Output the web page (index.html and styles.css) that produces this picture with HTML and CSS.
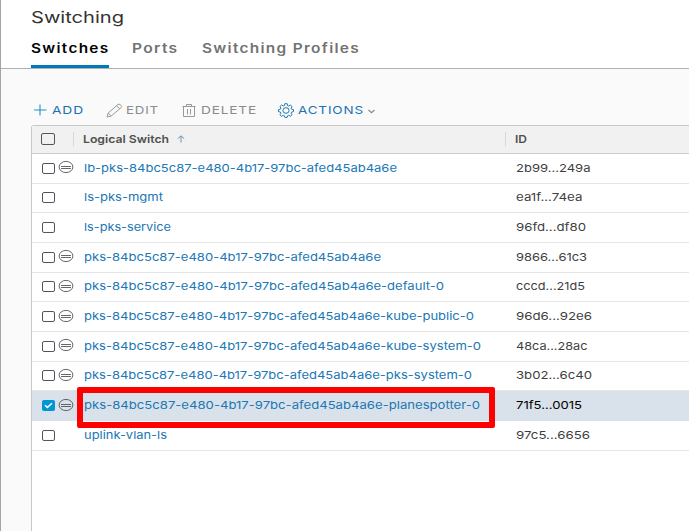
FILE: index.html
```
<!DOCTYPE html>
<html lang="en">
<head>
<meta charset="utf-8">
<title>Switching</title>
<link rel="stylesheet" href="styles.css">
</head>
<body>
<svg class="defs" aria-hidden="true">
  <symbol id="minus" viewBox="0 0 16 14"><ellipse cx="8" cy="7" rx="6.9" ry="5.6" fill="none" stroke="#555" stroke-width=".9"/><path d="M3 6.5h10M3 8.5h10" stroke="#555" stroke-width=".9"/></symbol>
</svg>
<header class="top">
  <h1><span class="fit" data-w="93">Switching</span></h1>
  <nav class="tabs">
    <a class="tab active"><span class="fit" data-w="78.5">Switches</span></a>
    <a class="tab ports"><span class="fit" data-w="46.5">Ports</span></a>
    <a class="tab profiles"><span class="fit" data-w="158">Switching Profiles</span></a>
  </nav>
</header>
<main class="content">
  <div class="toolbar">
    <button class="tool add"><svg width="14" height="14" viewBox="0 0 14 14"><path d="M7 1.5v11M1 7h12.5" stroke="#2591c5" stroke-width="1.1"/></svg><span class="fit" data-w="32">ADD</span></button>
    <button class="tool edit"><svg width="17" height="15" viewBox="0 0 17 15"><path d="M1 14l1.2-4L12 1.5q1-.8 2 .1l1.2 1q1 1 0 1.9L5.2 13z M10.5 2.8l3.4 3M2.2 10l3 3" fill="none" stroke="#999" stroke-width="1"/></svg><span class="fit" data-w="33">EDIT</span></button>
    <button class="tool delete"><svg width="14" height="15" viewBox="0 0 14 15"><path d="M.5 3.5h13M1.5 3.5v10h11v-10M4.5 3.5v-2h5v2M5.5 6v5.5M8.5 6v5.5" fill="none" stroke="#999"/></svg><span class="fit" data-w="56">DELETE</span></button>
    <button class="tool actions"><svg width="16" height="15" viewBox="0 0 16 15"><path d="M6.8.7h2.4l.4 1.8 1.1.5 1.7-1 1.7 1.6-1 1.5.5 1.1 1.9.4v2l-1.9.5-.5 1.1 1 1.5-1.7 1.6-1.7-1-1.1.5-.4 1.6H6.8l-.4-1.6-1.1-.5-1.7 1-1.7-1.6 1-1.5-.5-1.1-1.9-.5v-2l1.9-.4.5-1.1-1-1.5L3.6 2l1.7 1 1.1-.5z" fill="none" stroke="#2179b8"/><ellipse cx="8" cy="7.5" rx="3.1" ry="2.8" fill="none" stroke="#2179b8"/></svg><span class="fit" data-w="66">ACTIONS</span><svg class="caret" width="7" height="5" viewBox="0 0 7 5"><path d="M.5 1l3 2.7 3-2.7" fill="none" stroke="#888" stroke-width="1.2"/></svg></button>
  </div>
  <section class="grid">
    <div class="row head"><i class="box"></i><div class="name"><span class="fit" data-w="86">Logical Switch</span><svg width="8" height="8" viewBox="0 0 8 8"><path d="M4 7.5V1M.8 3.7L4 .8l3.2 2.9" fill="none" stroke="#6a93b3"/></svg></div><div class="id"><span class="fit" data-w="12">ID</span></div></div>
    <div class="row"><i class="box"></i><svg class="tag"><use href="#minus"/></svg><a class="name"><span class="fit" data-w="313">lb-pks-84bc5c87-e480-4b17-97bc-afed45ab4a6e</span></a><div class="id"><span class="fit" data-w="74.5">2b99...249a</span></div></div>
    <div class="row"><i class="box"></i><a class="name"><span class="fit" data-w="79">ls-pks-mgmt</span></a><div class="id"><span class="fit" data-w="66.5">ea1f...74ea</span></div></div>
    <div class="row"><i class="box"></i><a class="name"><span class="fit" data-w="87">ls-pks-service</span></a><div class="id"><span class="fit" data-w="70">96fd...df80</span></div></div>
    <div class="row"><i class="box"></i><svg class="tag"><use href="#minus"/></svg><a class="name"><span class="fit" data-w="297">pks-84bc5c87-e480-4b17-97bc-afed45ab4a6e</span></a><div class="id"><span class="fit" data-w="71">9866...61c3</span></div></div>
    <div class="row"><i class="box"></i><svg class="tag"><use href="#minus"/></svg><a class="name"><span class="fit" data-w="360">pks-84bc5c87-e480-4b17-97bc-afed45ab4a6e-default-0</span></a><div class="id"><span class="fit" data-w="69">cccd...21d5</span></div></div>
    <div class="row"><i class="box"></i><svg class="tag"><use href="#minus"/></svg><a class="name"><span class="fit" data-w="390">pks-84bc5c87-e480-4b17-97bc-afed45ab4a6e-kube-public-0</span></a><div class="id"><span class="fit" data-w="76">96d6...92e6</span></div></div>
    <div class="row"><i class="box"></i><svg class="tag"><use href="#minus"/></svg><a class="name"><span class="fit" data-w="397">pks-84bc5c87-e480-4b17-97bc-afed45ab4a6e-kube-system-0</span></a><div class="id"><span class="fit" data-w="71.5">48ca...28ac</span></div></div>
    <div class="row"><i class="box"></i><svg class="tag"><use href="#minus"/></svg><a class="name"><span class="fit" data-w="388">pks-84bc5c87-e480-4b17-97bc-afed45ab4a6e-pks-system-0</span></a><div class="id"><span class="fit" data-w="76">3b02...6c40</span></div></div>
    <div class="row selected"><i class="box checked"><svg width="13" height="11" viewBox="0 0 13 11"><path d="M3 5.2l2.4 2.2L10 3.2" fill="none" stroke="#fff" stroke-width="1.5"/></svg></i><svg class="tag"><use href="#minus"/></svg><a class="name"><span class="fit" data-w="396">pks-84bc5c87-e480-4b17-97bc-afed45ab4a6e-planespotter-0</span></a><div class="id"><span class="fit" data-w="66">71f5...0015</span></div><div class="callout"></div></div>
    <div class="row"><i class="box"></i><a class="name"><span class="fit" data-w="83">uplink-vlan-ls</span></a><div class="id"><span class="fit" data-w="74">97c5...6656</span></div></div>
  </section>
</main>
<script src="script.js"></script>
</body>
</html>
```
FILE: styles.css
```
* { box-sizing: border-box; }
body { margin: 0; width: 689px; height: 531px; overflow: hidden; display: flex; flex-direction: column; background: #fafafa; border-left: 1px solid #a2a4a8; font-family: Inter, "Open Sans", sans-serif; font-size: 11px; color: #3f3f3f; }
.defs { position: absolute; width: 0; height: 0; }
.fit { display: inline-block; white-space: nowrap; transform-origin: 0 50%; }
.top { height: 69px; flex: none; padding-left: 30px; background: #fff; border-bottom: 1px solid #b0b0b0; display: flex; flex-direction: column; }
h1 { margin: 0; padding-top: 6px; height: 34px; font-size: 16px; line-height: 23px; font-weight: 400; color: #333; }
.tabs { display: flex; height: 35px; flex: none; }
.tab { font-size: 13px; line-height: 17px; font-weight: 600; letter-spacing: 1.1px; color: #727272; padding-top: 7px; height: 35px; }
.tab.active { width: 78px; color: #000; border-bottom: 3px solid #0079b8; }
.ports { margin-left: 23px; width: 47px; }
.profiles { margin-left: 23px; }
.content { flex: 1; display: flex; flex-direction: column; padding-left: 30px; }
.toolbar { height: 56px; flex: none; padding-top: 33px; display: flex; }
.tool { display: flex; align-items: center; height: 16px; flex: none; padding: 0; border: 0; background: none; font: 400 11px/16px Inter, sans-serif; letter-spacing: .7px; color: #8c8c8c; text-align: left; }
.tool svg { flex: none; }
.add { margin-left: 2px; gap: 5px; width: 73px; color: #1a73b3; }
.edit { gap: 3px; width: 76px; }
.delete { gap: 5px; width: 96px; }
.actions { gap: 4px; color: #1a73b3; }
.actions .caret { margin-top: 2px; }
.grid { flex: 1; border: 1px solid #c8c8c8; border-right: 0; border-bottom: 0; border-top-left-radius: 3px; background: #fff; }
.row { position: relative; height: 29.67px; display: grid; grid-template-columns: 16px 26px 432px 1fr; padding-left: 10px; align-items: center; border-bottom: 1px solid #e5e5e5; }
.head { height: 28px; padding-bottom: 2px; background: #f1f1f1; border-color: #ccc; font-weight: 600; color: #505050; }
.box { grid-column: 1; width: 13px; height: 11px; border: 1px solid #5c5060; border-radius: 2px; background: #fff; }
.head .box { width: 14px; height: 12px; margin-left: -1px; background: none; border-color: #555; border-width: 1.5px; }
.checked { border: 0; background: #0095d3; }
.checked svg { display: block; }
.tag { grid-column: 2; width: 16px; height: 14px; margin-bottom: 2px; }
.name { grid-column: 3; color: #2077b5; }
.id { grid-column: 4; }
.head .name, .head .id { display: flex; align-items: center; height: 14px; border-left: 1px solid #d7d7d7; color: #505050; }
.head .name { padding-left: 9px; margin-left: -11px; gap: 8px; }
.head .id { padding-left: 9px; margin-left: -11px; }
.row > * { grid-row: 1; }
.row:not(.head) .name, .row:not(.head) .id { padding-bottom: 1px; }
.selected { background: #d9e2ea; border-color: #d9e2ea; }
.selected .id { color: #000; }
.callout { position: absolute; left: 45px; top: -4px; width: 418px; height: 41px; border: 6px solid #fe0000; border-radius: 2px; z-index: 1; }
```
FILE: script.js
```
document.querySelectorAll('.fit').forEach(function (label) {
  var target = parseFloat(label.dataset.w);
  var natural = label.getBoundingClientRect().width;
  label.style.width = target + 'px';
  label.style.transform = 'scaleX(' + target / natural + ')';
  label.style.transformOrigin = '0 50%';
});
```
